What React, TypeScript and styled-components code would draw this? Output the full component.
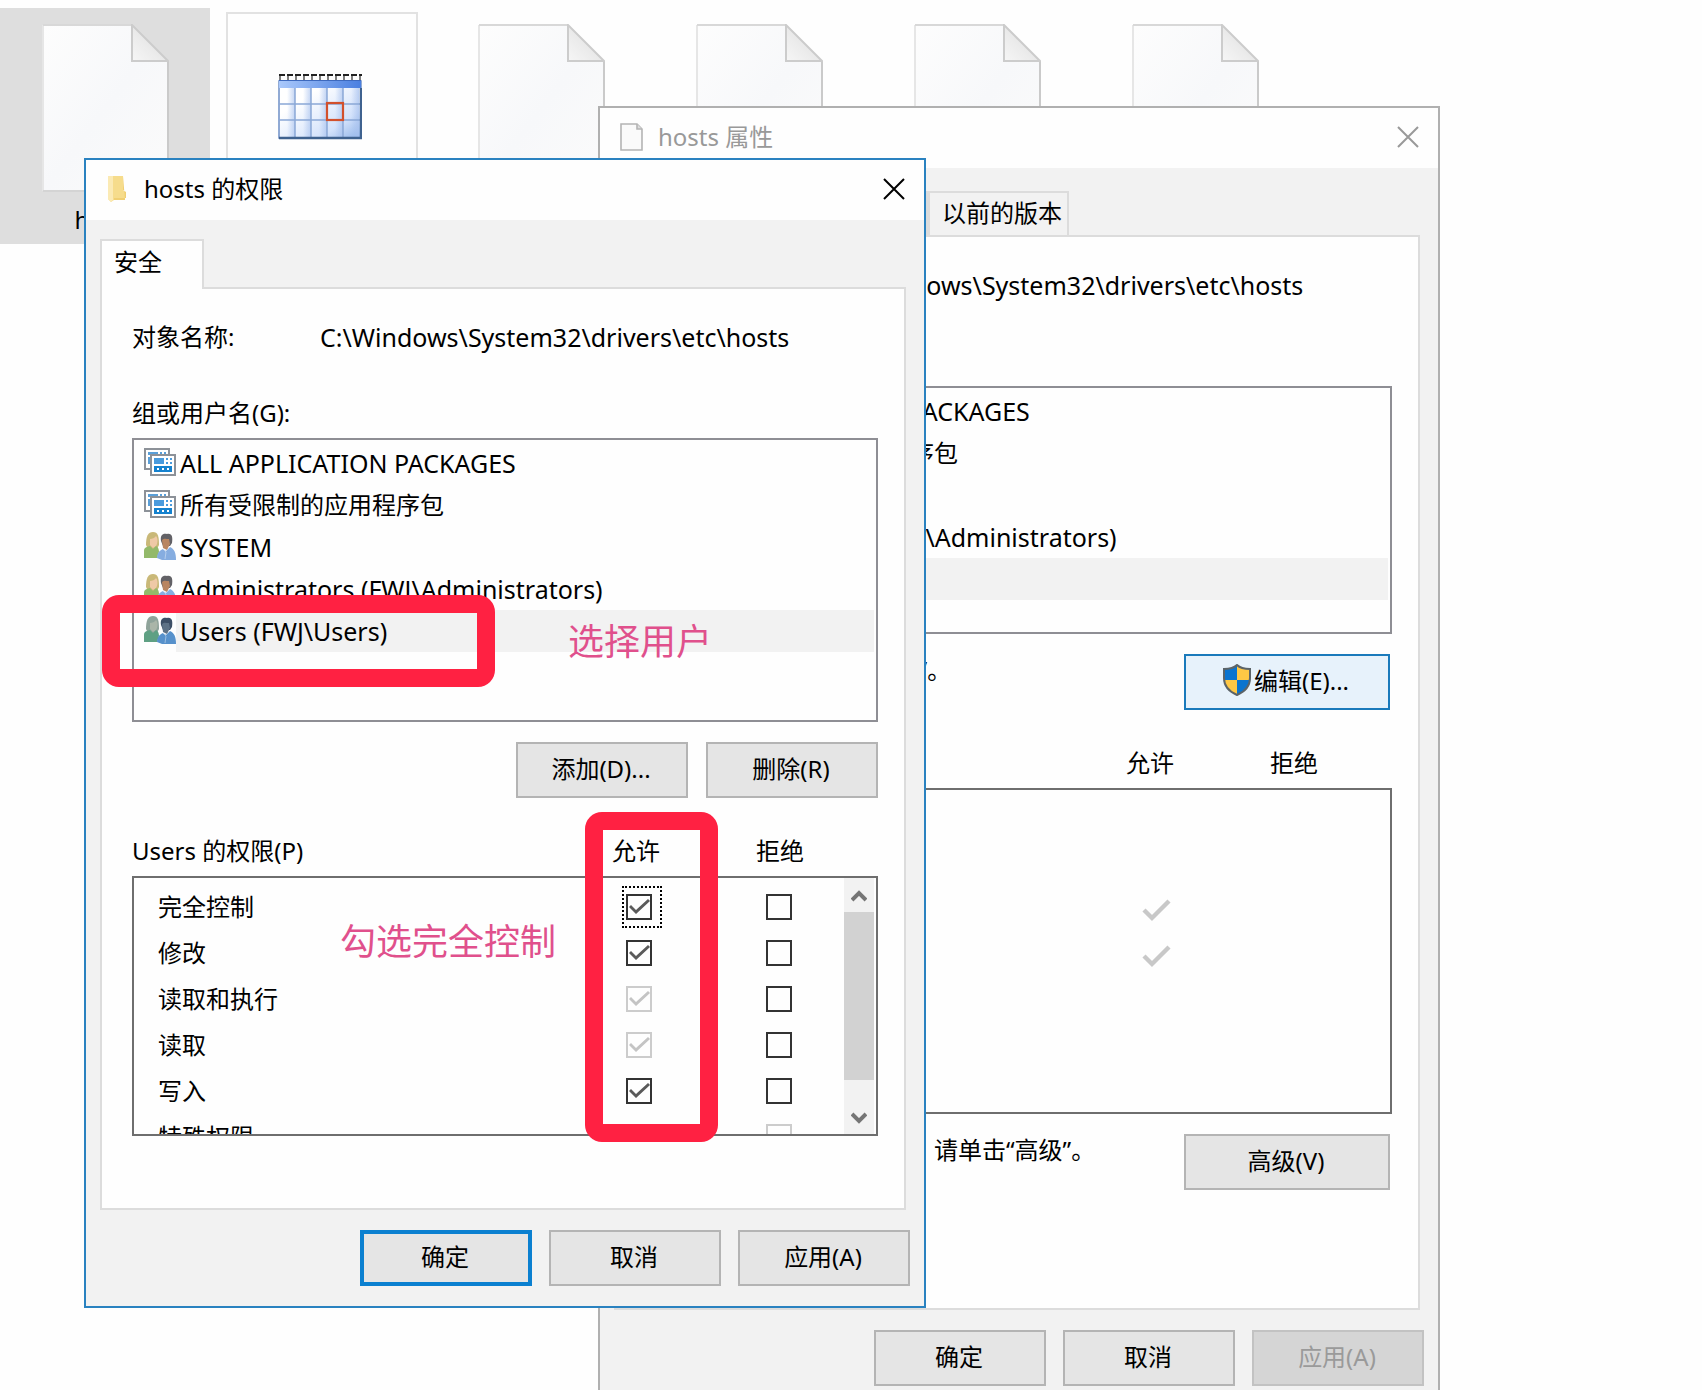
import React from "react";
import styled, { createGlobalStyle, css } from "styled-components";

const GlobalStyle = createGlobalStyle`
  *, *::before, *::after { box-sizing: border-box; }
  body { margin: 0; background: #fefefe; }
  body, button, input, table {
    font-family: "Noto Sans", "Noto Sans CJK SC", sans-serif;
    font-size: 24px;
    line-height: 32px;
    color: #000;
  }
`;

const Desktop = styled.main`
  position: relative;
  height: 100vh;
  overflow: hidden;
  background: #fefefe;
`;

/* ---------- Explorer files ---------- */

const FileGrid = styled.div`
  display: flex;
  gap: 8px;
  padding-top: 8px;
`;

const FileTile = styled.div<{ $selected?: boolean }>`
  display: flex;
  flex-direction: column;
  align-items: center;
  flex: none;
  gap: 12px;
  width: 210px;
  height: 236px;
  padding-top: 16px;
  background: ${(p) => (p.$selected ? "#dedede" : "transparent")};
`;

const ThumbnailTile = styled(FileTile)`
  width: 208px;
  margin-right: 2px;
  padding-top: 4px;
`;

const Thumbnail = styled.div`
  flex: none;
  width: 192px;
  height: 192px;
  padding: 60px 0 0 50px;
  border: 2px solid #e2e2e2;
`;

/* ---------- Windows ---------- */

const WindowFrame = styled.section<{ $x: number; $y: number; $active?: boolean }>`
  position: absolute;
  isolation: isolate;
  left: ${(p) => p.$x}px;
  top: ${(p) => p.$y}px;
  width: 842px;
  border: 2px solid ${(p) => (p.$active ? "#2a82c0" : "#b0b0b0")};
  background: #f2f2f2;
`;

const TitleBar = styled.header<{ $active?: boolean }>`
  display: flex;
  align-items: center;
  gap: 15px;
  height: 60px;
  padding: 0 19px 3px 20px;
  background: #fefefe;
  color: ${(p) => (p.$active ? "#000" : "#999")};
`;

const WindowTitle = styled.h1`
  flex: 1;
  margin: 0;
  font-size: 24px;
  font-weight: 400;
  line-height: 32px;
`;

const CloseButton = styled.button`
  display: flex;
  padding: 0;
  border: 0;
  background: none;
  color: inherit;
`;

const TabStrip = styled.div`
  display: flex;
  align-items: flex-end;
  height: 67px;
  padding-left: 14px;
`;

const Tab = styled.button<{ $active?: boolean; $width: number }>`
  width: ${(p) => p.$width}px;
  height: 44px;
  padding: 0 0 3px 12px;
  border: 2px solid #dcdcdc;
  border-bottom: 0;
  background: #f2f2f2;
  text-align: left;
  ${(p) =>
    p.$active &&
    css`
      z-index: 1;
      height: 50px;
      margin-bottom: -2px;
      padding-bottom: 6px;
      background: #fefefe;
    `}
`;

const TabPanel = styled.div<{ $bottom: number }>`
  margin: 0 18px 0 14px;
  padding: 32px 26px ${(p) => p.$bottom}px 30px;
  border: 2px solid #dcdcdc;
  background: #fefefe;
`;

const ObjectRow = styled.div`
  display: grid;
  grid-template-columns: 188px 1fr;
`;

const ObjectPath = styled.span`
  font-size: 25px;
`;

const GroupLabel = styled.div`
  margin: 44px 0 9px;
`;

const PrincipalList = styled.ul<{ $height: number }>`
  height: ${(p) => p.$height}px;
  margin: 0;
  padding: 2px 2px 2px 10px;
  border: 2px solid #8e8e94;
  list-style: none;
`;

const Principal = styled.li`
  display: flex;
  align-items: flex-start;
  height: 42px;
  & > svg {
    margin-top: 4px;
  }
`;

const PrincipalName = styled.span<{ $selected?: boolean; $latin?: boolean }>`
  flex: 1;
  height: 42px;
  padding-left: 4px;
  font-size: ${(p) => (p.$latin ? 25 : 24)}px;
  line-height: 42px;
  background: ${(p) => (p.$selected ? "#f2f2f2" : "transparent")};
`;

const ActionRow = styled.div`
  display: flex;
  justify-content: flex-end;
  gap: 18px;
  margin-top: 20px;
`;

const HintRow = styled.div`
  display: flex;
  justify-content: space-between;
  align-items: flex-start;
  margin-top: 20px;
  padding-right: 2px;
`;

const Footer = styled.footer`
  display: flex;
  justify-content: flex-end;
  gap: 17px;
  padding: 20px 14px;
`;

const PushButton = styled.button<{ $wide?: boolean; $kind?: "default" | "hover" }>`
  display: flex;
  align-items: center;
  justify-content: center;
  gap: 3px;
  flex: none;
  width: ${(p) => (p.$wide ? 206 : 172)}px;
  height: 56px;
  padding: 0 2px 2px 0;
  border: 2px solid #b4b4b4;
  background: #e5e5e5;
  ${(p) => p.$kind === "default" && css`border: 4px solid #0b80d0;`}
  ${(p) => p.$kind === "hover" && css`border-color: #1a7abb; background: #e7f2fb;`}
  &:disabled {
    border-color: #c2c2c2;
    background: #d5d5d5;
    color: #9a9a9a;
  }
  & > svg {
    margin-bottom: 3px;
  }
`;

/* ---------- Permissions ---------- */

const PermissionHeader = styled.div`
  display: grid;
  grid-template-columns: 1fr 144px 122px;
  margin: 37px 0 9px;
`;

const PermissionBox = styled.div<{ $height: number }>`
  display: flex;
  height: ${(p) => p.$height}px;
  padding-right: 2px;
  border: 2px solid #6e6e6e;
  overflow: hidden;
`;

const TableArea = styled.div`
  flex: 1;
  padding-top: 6px;
`;

const PermissionTable = styled.table`
  width: 100%;
  border-collapse: collapse;
  table-layout: fixed;
`;

const NameCell = styled.th`
  height: 46px;
  padding: 0 0 0 24px;
  font-weight: 400;
  text-align: left;
`;

const CheckCell = styled.td<{ $width: number }>`
  width: ${(p) => p.$width}px;
  height: 46px;
  padding: 0;
`;

const CheckHolder = styled.label<{ $focused?: boolean }>`
  display: flex;
  align-items: center;
  width: 40px;
  height: 42px;
  padding-left: 2px;
  border: 2px dotted ${(p) => (p.$focused ? "#000" : "transparent")};
`;

const CheckInput = styled.input`
  appearance: none;
  position: relative;
  width: 26px;
  height: 26px;
  margin: 0;
  border: 2px solid #333;
  background: #fefefe;
  color: #5a5a5a;
  &:checked::before {
    content: "";
    position: absolute;
    inset: 0;
    background: currentColor;
    clip-path: polygon(1px 11px, 3px 9px, 8px 14px, 20px 3px, 22px 5px, 8px 18px);
  }
  &:disabled {
    border-color: #ccc;
    color: #c4c4c4;
  }
`;

const GrantedMark = styled.span`
  display: flex;
  padding-left: 6px;
`;

const ScrollBar = styled.div`
  display: flex;
  flex-direction: column;
  width: 30px;
  background: #f2f2f2;
`;

const ScrollButton = styled.button`
  display: flex;
  align-items: center;
  justify-content: center;
  height: 34px;
  padding: 2px 0 0;
  border: 0;
  background: none;
`;

const ScrollThumb = styled.div`
  height: 168px;
  margin-bottom: auto;
  background: #d2d2d2;
`;

/* ---------- Annotations ---------- */

const Highlight = styled.div<{ $x: number; $y: number; $w: number; $h: number }>`
  position: absolute;
  left: ${(p) => p.$x}px;
  top: ${(p) => p.$y}px;
  width: ${(p) => p.$w}px;
  height: ${(p) => p.$h}px;
  border: 18px solid #ff2142;
  border-radius: 17px;
`;

const Note = styled.p<{ $x: number; $y: number }>`
  position: absolute;
  left: ${(p) => p.$x}px;
  top: ${(p) => p.$y}px;
  margin: 0;
  font-family: "Noto Sans CJK SC", sans-serif;
  font-size: 36px;
  font-weight: 400;
  line-height: 48px;
  color: #e0508c;
`;

/* ---------- Icons ---------- */

const DocumentIcon = ({ id }: { id: string }) => (
  <svg width="127" height="168" viewBox="0 0 127 168" aria-hidden="true">
    <defs>
      <linearGradient id={`page-${id}`} x1="0" y1="0" x2="1" y2="1">
        <stop offset="0" stopColor="#fdfdfd" />
        <stop offset="0.5" stopColor="#f7f8fa" />
        <stop offset="1" stopColor="#fbfbfb" />
      </linearGradient>
      <linearGradient id={`fold-${id}`} x1="0" y1="1" x2="0.6" y2="0.4">
        <stop offset="0" stopColor="#f6f6f6" />
        <stop offset="1" stopColor="#e6e6e6" />
      </linearGradient>
    </defs>
    <path d="M1 1H90L126 37V167H1Z" fill={`url(#page-${id})`} />
    <path d="M1 167V1" stroke="#e6e6e6" strokeWidth="2" />
    <path d="M1 1H90" stroke="#d8d8d8" strokeWidth="2" />
    <path d="M126 37V167" stroke="#cacaca" strokeWidth="2" />
    <path d="M1 167H126" stroke="#d4d4d4" strokeWidth="2" />
    <path d="M90 1L126 37H90Z" fill={`url(#fold-${id})`} stroke="#cccccc" strokeWidth="2" />
  </svg>
);

const CalendarIcon = () => (
  <svg width="84" height="66" viewBox="0 0 84 66" aria-hidden="true">
    <defs>
      <linearGradient id="cal-body" x1="0" y1="0" x2="1" y2="1">
        <stop offset="0.3" stopColor="#fff" />
        <stop offset="0.75" stopColor="#d3e2fb" />
        <stop offset="1" stopColor="#8fb3e8" />
      </linearGradient>
      <linearGradient id="cal-head" x1="0" y1="0" x2="1" y2="0">
        <stop offset="0" stopColor="#a9c8fb" />
        <stop offset="1" stopColor="#4a7fe0" />
      </linearGradient>
      <linearGradient id="cal-cell" x1="0" y1="0" x2="1" y2="0">
        <stop offset="0.5" stopColor="#a9c2ee" stopOpacity="0" />
        <stop offset="1" stopColor="#a9c2ee" stopOpacity="0.7" />
      </linearGradient>
    </defs>
    <rect x="1" y="7" width="82" height="57" fill="url(#cal-body)" stroke="#6d8fc6" strokeWidth="1.5" />
    {[1, 17, 33, 49, 65].map((x) => (
      <rect key={x} x={x} y="14" width="16" height="49" fill="url(#cal-cell)" />
    ))}
    <rect x="1" y="6" width="82" height="8" fill="url(#cal-head)" />
    <path d="M1 6.5H83" stroke="#3d69be" strokeWidth="1" />
    <path d="M17 14V63M33 14V63M49 14V63M65 14V63M1 30H83M1 46H83" stroke="#8ba8d6" strokeWidth="1.5" />
    <path d="M1 64H83V14" fill="none" stroke="#3f628f" strokeWidth="2.4" />
    <path d="M1 1H84" stroke="#222" strokeWidth="2" strokeDasharray="6 2" />
    <path d="M2 2V6M10 2V6M18 2V6M26 2V6M34 2V6M42 2V6M50 2V6M58 2V6M66 2V6M74 2V6M82 2V6" stroke="#555" strokeWidth="1.5" />
    <rect x="49" y="29" width="16" height="17" fill="none" stroke="#d2502c" strokeWidth="2.2" />
  </svg>
);

const FolderIcon = () => (
  <svg width="23" height="28" viewBox="0 0 23 28" aria-hidden="true">
    <path d="M2 1H17V15L19 17V25H8L5 27L2 24Z" fill="#f6dc8c" />
    <path d="M2 1H7V25L5 27L2 24Z" fill="#fbeab4" />
    <path d="M17 1V15L20 17V23H8V25L19 25" fill="#f0cf73" />
  </svg>
);

const SmallFileIcon = () => (
  <svg width="23" height="28" viewBox="0 0 23 28" aria-hidden="true">
    <path d="M1 1H17L22 6V27H1Z" fill="#fafafa" stroke="#b4b4b4" strokeWidth="1.6" />
    <path d="M17 1V6H22" fill="#ddd" stroke="#b4b4b4" strokeWidth="1.6" />
  </svg>
);

const CloseIcon = () => (
  <svg width="22" height="22" viewBox="0 0 22 22" aria-hidden="true">
    <path d="M1 1L21 21M21 1L1 21" stroke="currentColor" strokeWidth="2" />
  </svg>
);

const PackageIcon = () => (
  <svg width="32" height="32" viewBox="0 0 32 32" aria-hidden="true">
    <rect x="1" y="3" width="24" height="20" fill="#fff" stroke="#8c9198" strokeWidth="2" />
    <path d="M4 6H14V9H4ZM16 6H18V8H16ZM20 6H22V8H20ZM4 11H7V18H4Z" fill="#5a9fd8" />
    <rect x="7" y="9" width="24" height="20" fill="#fff" stroke="#8c9198" strokeWidth="2" />
    <rect x="10" y="12" width="10" height="6" fill="#4a9bdd" />
    <path d="M22 12H24V14H22ZM26 12H28V14H26ZM22 16H24V18H22ZM26 16H28V18H26Z" fill="#4a9bdd" />
    <rect x="10" y="20" width="18" height="6" fill="#1582cf" />
    <path d="M13 22H15V24H13ZM18 22H20V24H18ZM23 22H25V24H23Z" fill="#fff" />
  </svg>
);

const UsersIcon = ({ selected }: { selected?: boolean }) => {
  const c = selected
    ? { hair: "#8fa39a", face: "#aab5a8", green: "#5fa083", dark: "#3d4f66", skin: "#5e7286", blue: "#5791cb" }
    : { hair: "#c9b878", face: "#efc9a6", green: "#93b96a", dark: "#626166", skin: "#b98560", blue: "#86ade0" };
  return (
    <svg width="32" height="32" viewBox="0 0 32 32" aria-hidden="true">
      <path d="M2 15C2 6 4 2 9 2S15 6 15 15L13 19H4Z" fill={c.hair} />
      <path d="M6 9C8 9 11 8 12 6C14 8 14 13 12 16L9 18L6 15Z" fill={c.face} />
      <path d="M0 28V21C0 17 3 17 6 16L9 19L12 16C14 17 15 19 15 22L13 28Z" fill={c.green} />
      <path d="M17 11C16 5 19 3 23 4C28 3 29 7 28 13L26 16H19Z" fill={c.dark} />
      <path d="M18 10C20 8 22 9 25 9L26 14L23 20L19 18Z" fill={c.skin} />
      <path d="M13 28C13 23 16 20 19 19L22 21L26 17C30 19 32 22 32 30H18Z" fill={c.blue} />
      <path d="M19 19L22 22L21 29" fill="none" stroke="#fff" strokeOpacity="0.4" strokeWidth="1" />
    </svg>
  );
};

const ShieldIcon = () => (
  <svg width="28" height="32" viewBox="0 0 28 32" aria-hidden="true">
    <path d="M14 1C11 4 6 5 1 5V14C1 23 7 28 14 31Z" fill="#0a74cf" />
    <path d="M14 1C17 4 22 5 27 5V14C27 23 21 28 14 31Z" fill="#ffc845" />
    <path d="M1 16H14V31C7 28 2 23 1 16Z" fill="#ffc845" />
    <path d="M27 16H14V31C21 28 26 23 27 16Z" fill="#0a74cf" />
    <path d="M14 1C11 4 6 5 1 5V14C1 23 7 28 14 31C21 28 27 23 27 14V5C22 5 17 4 14 1Z" fill="none" stroke="#5c6468" strokeWidth="2" />
  </svg>
);

const GrantedIcon = () => (
  <svg width="30" height="28" viewBox="0 0 30 28" aria-hidden="true">
    <path d="M2 13L10 21L27 4" fill="none" stroke="#c8c8c8" strokeWidth="4.4" />
  </svg>
);

const Chevron = ({ down }: { down?: boolean }) => (
  <svg width="16" height="14" viewBox="0 0 16 14" aria-hidden="true">
    <path d={down ? "M1 3L8 10L15 3" : "M1 11L8 4L15 11"} fill="none" stroke="#757575" strokeWidth="4" />
  </svg>
);

/* ---------- Data ---------- */

const objectPath = "C:\\Windows\\System32\\drivers\\etc\\hosts";

const principals = [
  { name: "ALL APPLICATION PACKAGES", kind: "package", latin: true },
  { name: "所有受限制的应用程序包", kind: "package" },
  { name: "SYSTEM", kind: "users", latin: true },
  { name: "Administrators (FWJ\\Administrators)", kind: "users", latin: true },
  { name: "Users (FWJ\\Users)", kind: "users", latin: true, selected: true },
];

const permissions = [
  { name: "完全控制", allow: true, focused: true },
  { name: "修改", allow: true },
  { name: "读取和执行", allow: true, inherited: true },
  { name: "读取", allow: true, inherited: true },
  { name: "写入", allow: true },
  { name: "特殊权限", allow: false, inherited: true, denyLocked: true },
];

/* ---------- Parts ---------- */

const Principals = ({ height }: { height: number }) => (
  <PrincipalList $height={height}>
    {principals.map((p) => (
      <Principal key={p.name}>
        {p.kind === "package" ? <PackageIcon /> : <UsersIcon selected={p.selected} />}
        <PrincipalName $selected={p.selected} $latin={p.latin}>
          {p.name}
        </PrincipalName>
      </Principal>
    ))}
  </PrincipalList>
);

const PermissionTitles = () => (
  <PermissionHeader>
    <span>Users 的权限(P)</span>
    <span>允许</span>
    <span>拒绝</span>
  </PermissionHeader>
);

const PropertiesWindow = () => (
  <WindowFrame $x={598} $y={106}>
    <TitleBar>
      <SmallFileIcon />
      <WindowTitle>hosts 属性</WindowTitle>
      <CloseButton aria-label="关闭">
        <CloseIcon />
      </CloseButton>
    </TitleBar>
    <TabStrip>
      <Tab $width={90}>常规</Tab>
      <Tab $width={104} $active>安全</Tab>
      <Tab $width={120}>详细信息</Tab>
      <Tab $width={141}>以前的版本</Tab>
    </TabStrip>
    <TabPanel $bottom={118}>
      <ObjectRow>
        <span>对象名称:</span>
        <ObjectPath>{objectPath}</ObjectPath>
      </ObjectRow>
      <GroupLabel>组或用户名(G):</GroupLabel>
      <Principals height={248} />
      <HintRow>
        <span>要更改权限，请单击“编辑”。</span>
        <PushButton $wide $kind="hover">
          <ShieldIcon />
          编辑(E)...
        </PushButton>
      </HintRow>
      <PermissionTitles />
      <PermissionBox $height={326}>
        <TableArea>
          <PermissionTable>
            <tbody>
              {permissions.map((p) => (
                <tr key={p.name}>
                  <NameCell scope="row">{p.name}</NameCell>
                  <CheckCell $width={140}>
                    <GrantedMark>{p.allow && p.inherited && <GrantedIcon />}</GrantedMark>
                  </CheckCell>
                  <CheckCell $width={112} />
                </tr>
              ))}
            </tbody>
          </PermissionTable>
        </TableArea>
      </PermissionBox>
      <HintRow>
        <span>有关特殊权限或高级设置，请单击“高级”。</span>
        <PushButton $wide>高级(V)</PushButton>
      </HintRow>
    </TabPanel>
    <Footer>
      <PushButton>确定</PushButton>
      <PushButton>取消</PushButton>
      <PushButton disabled>应用(A)</PushButton>
    </Footer>
  </WindowFrame>
);

const PermissionsWindow = () => (
  <WindowFrame $x={84} $y={158} $active>
    <TitleBar $active>
      <FolderIcon />
      <WindowTitle>hosts 的权限</WindowTitle>
      <CloseButton aria-label="关闭">
        <CloseIcon />
      </CloseButton>
    </TitleBar>
    <TabStrip>
      <Tab $width={104} $active>安全</Tab>
    </TabStrip>
    <TabPanel $bottom={72}>
      <ObjectRow>
        <span>对象名称:</span>
        <ObjectPath>{objectPath}</ObjectPath>
      </ObjectRow>
      <GroupLabel>组或用户名(G):</GroupLabel>
      <Principals height={284} />
      <ActionRow>
        <PushButton>添加(D)...</PushButton>
        <PushButton>删除(R)</PushButton>
      </ActionRow>
      <PermissionTitles />
      <PermissionBox $height={260}>
        <TableArea>
          <PermissionTable>
            <tbody>
              {permissions.map((p) => (
                <tr key={p.name}>
                  <NameCell scope="row">{p.name}</NameCell>
                  <CheckCell $width={140}>
                    <CheckHolder $focused={p.focused}>
                      <CheckInput
                        type="checkbox"
                        aria-label={`${p.name} 允许`}
                        defaultChecked={p.allow}
                        disabled={p.inherited}
                      />
                    </CheckHolder>
                  </CheckCell>
                  <CheckCell $width={82}>
                    <CheckHolder>
                      <CheckInput type="checkbox" aria-label={`${p.name} 拒绝`} disabled={p.denyLocked} />
                    </CheckHolder>
                  </CheckCell>
                </tr>
              ))}
            </tbody>
          </PermissionTable>
        </TableArea>
        <ScrollBar>
          <ScrollButton aria-label="向上滚动">
            <Chevron />
          </ScrollButton>
          <ScrollThumb />
          <ScrollButton aria-label="向下滚动">
            <Chevron down />
          </ScrollButton>
        </ScrollBar>
      </PermissionBox>
    </TabPanel>
    <Footer>
      <PushButton $kind="default">确定</PushButton>
      <PushButton>取消</PushButton>
      <PushButton>应用(A)</PushButton>
    </Footer>
  </WindowFrame>
);

export default function App() {
  return (
    <Desktop>
      <GlobalStyle />
      <FileGrid>
        <FileTile $selected>
          <DocumentIcon id="hosts" />
          <span>hosts</span>
        </FileTile>
        <ThumbnailTile>
          <Thumbnail>
            <CalendarIcon />
          </Thumbnail>
        </ThumbnailTile>
        {["a", "b", "c", "d"].map((id) => (
          <FileTile key={id}>
            <DocumentIcon id={id} />
          </FileTile>
        ))}
      </FileGrid>
      <PropertiesWindow />
      <PermissionsWindow />
      <Highlight $x={102} $y={595} $w={393} $h={92} />
      <Highlight $x={585} $y={812} $w={133} $h={330} />
      <Note $x={568} $y={615}>选择用户</Note>
      <Note $x={340} $y={915}>勾选完全控制</Note>
    </Desktop>
  );
}
